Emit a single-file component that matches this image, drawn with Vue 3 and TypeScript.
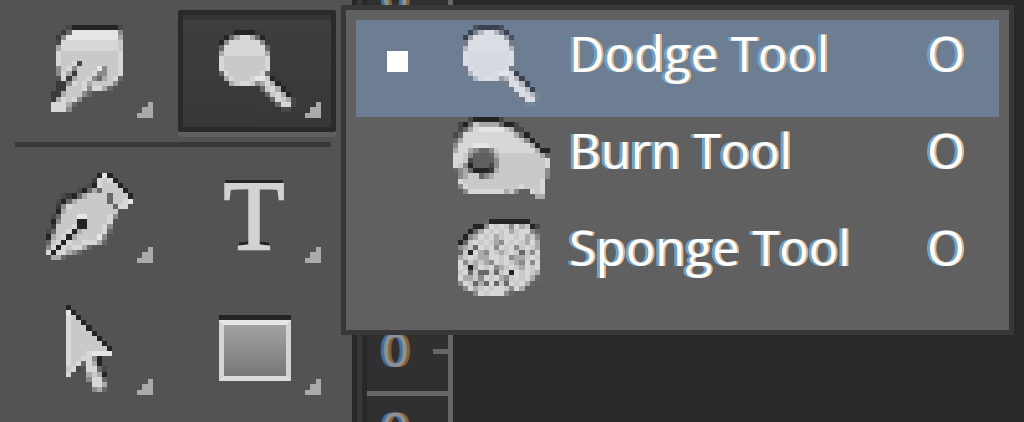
<script setup lang="ts">
import { ref } from 'vue'

interface Pixel {
  x: number
  y: number
  w: number
  fill: string
}
interface Icon {
  cols: number
  rows: number
  width: number
  height: number
  pixels: Pixel[]
}

const CELL = 5.12

const grey: Record<string, string> = {
  k: '#242424', d: '#3a3a3a', e: '#484848', m: '#686868',
  g: '#8b8b8b', a: '#aaaaaa', l: '#c9c9c9', w: '#d7d7d7', W: '#e5e5e5',
}
const highlighted: Record<string, string> = {
  k: '#3a4150', d: '#465263', e: '#6f8799', m: '#747d89',
  g: '#999da4', a: '#b3b7bf', l: '#d5d9e2', w: '#dadde4', W: '#e2e4e8',
}

function icon(map: string[], palette: Record<string, string> = grey): Icon {
  const cols = Math.max(...map.map((row) => row.length))
  const pixels: Pixel[] = []
  map.forEach((row, y) => {
    let x = 0
    while (x < row.length) {
      const key = row[x]
      let end = x + 1
      while (end < row.length && row[end] === key) end++
      if (palette[key]) pixels.push({ x, y, w: end - x, fill: palette[key] })
      x = end
    }
  })
  return {
    cols,
    rows: map.length,
    width: Math.round(cols * CELL),
    height: Math.round(map.length * CELL),
    pixels,
  }
}

const smudgeMap = [
  '...ekkkkkkkkke.',
  '..dmWWWWWWWWWg.',
  '.dgWWWWWWWWWWa.',
  '.ewwwwwwwwwwwl.',
  '.awwwwwwwwwwwl.',
  '.wlllllllllllw.',
  '.wlllllllllllw.',
  '.wllwelllllllw.',
  '.glwgllllWgllw.',
  '.gwadlllwggllw.',
  '..wdallwgmalwm.',
  '.ddgwlwallllg..',
  '.ddlllwgwwam...',
  'ddalllgm.......',
  'dawlwg.........',
  'wwwam..........',
  'wwwg...........',
  '...............',
]
const dodgeMap = [
  '..dkkkkd.......',
  '.kmawwamk......',
  'kgwwwwwwgd.....',
  'mwwwwwwwwm.....',
  'awwwwwwwwa.....',
  'wllllllllw.....',
  'wllllllllw.....',
  'wllllllllw.....',
  'mwllllllwm.....',
  '.awlllwWWlk....',
  '..alwwlgawak...',
  '........mlwak..',
  '.........mlwak.',
  '..........mwlae',
  '...........mwwe',
  '............ee.',
]
const penMap = [
  '..........kWk....',
  '.........dwlwk...',
  '........ekwlllk..',
  '......ekmamllllk.',
  '...edkmallllmlllk',
  '..ekmallllllmllwW',
  '..dgwllllllllmww.',
  '..kallllllllll...',
  '.emlllWWllllwg...',
  '.kglllkkllllw....',
  '.dlllwkklllwg....',
  'emllwkallllwm....',
  'kalwkallllWg.....',
  'mlwkwllwwwam.....',
  'gwkwlwwam........',
  'wkwwagm..........',
  '.aam.............',
]
const arrowMap = [
  'k........',
  'Wk.......',
  'wlk......',
  'wllk.....',
  'wlllk....',
  'wllllk...',
  'wlllllk..',
  'wllllllk.',
  'wlllllllk',
  'wlllwWWWW',
  'wllwwgk..',
  'wlwmwak..',
  'lwe.wwme.',
  'w...alak.',
  '....gwwm.',
  '.....wwa.',
  '.....gam.',
]
const burnMap = [
  '...ekkkkke.........',
  '.ekmlaaaamkke......',
  '.emawWWWWWlaee.....',
  'emwwwwwwwwwwamk....',
  'mawwwwwwwwwwwlgk...',
  'gwwwWWWwwwwwwwwak..',
  'awwagmmglwwwwwwwakk',
  'wwlg...mallllllllam',
  'wwle....glllllllllw',
  'wlgk...eglllllllllw',
  'mgamkkkdalllllllllg',
  '.gallmgallllllllllg',
  '.wlllllllllllllllw.',
  '.gwllllllllllwlllw.',
  '..gwwwwwwwalg..wlw.',
  '................aa.',
]
const spongeMap = [
  '.....mkkkkkkkk...',
  '...kkgwlwlgwalke.',
  '..kmawlwlwalwwgm.',
  '.kgawlwalwwlwalg.',
  'kmlwlwlagwlwlawa.',
  'galmwlwgwlwglwla.',
  'mlkwagwlalwlmlgw.',
  'alwlaawwlwgaalwl.',
  'wglalagwlwlagwgw.',
  'wlkawlwgalwlawlw.',
  'lwmlmmlmlwkwlwla.',
  'waalgwlwaglwlwam.',
  'gwlmamwmlmwlwam..',
  '.gwalwlwwlgwa....',
  '...gwlwwwgm......',
]

type Tool = { id: string; name: string; icon?: Icon }
const toolRows: Tool[][] = [
  [
    { id: 'smudge', name: 'Smudge Tool', icon: icon(smudgeMap) },
    { id: 'dodge', name: 'Dodge Tool', icon: icon(dodgeMap) },
  ],
  [
    { id: 'pen', name: 'Pen Tool', icon: icon(penMap) },
    { id: 'type', name: 'Type Tool' },
  ],
  [
    { id: 'path', name: 'Path Selection Tool', icon: icon(arrowMap) },
    { id: 'rectangle', name: 'Rectangle Tool' },
  ],
]
const activeTool = ref('dodge')

const menu = [
  { name: 'Dodge Tool', key: 'O', icon: icon(dodgeMap, highlighted) },
  { name: 'Burn Tool', key: 'O', icon: icon(burnMap) },
  { name: 'Sponge Tool', key: 'O', icon: icon(spongeMap) },
]
const chosen = ref(0)
</script>

<template>
  <div class="workspace">
    <div class="toolbar" role="toolbar" aria-label="Tools">
      <div v-for="(row, r) in toolRows" :key="r" class="tool-row">
        <button
          v-for="tool in row"
          :key="tool.id"
          type="button"
          class="tool"
          :class="{ active: tool.id === activeTool }"
          :aria-label="tool.name"
          @click="activeTool = tool.id"
        >
          <svg
            v-if="tool.icon"
            :width="tool.icon.width"
            :height="tool.icon.height"
            :viewBox="`0 0 ${tool.icon.cols} ${tool.icon.rows}`"
            preserveAspectRatio="none"
            shape-rendering="crispEdges"
          >
            <rect v-for="(p, i) in tool.icon.pixels" :key="i" :x="p.x" :y="p.y" :width="p.w" height="1" :fill="p.fill" />
          </svg>
          <span v-else-if="tool.id === 'type'" class="type-glyph">T</span>
          <span v-else class="rectangle-shape"></span>
          <svg class="more" viewBox="0 0 3 3" shape-rendering="crispEdges">
            <path d="M2 0h1v3H0V2h1V1h1z" fill="#aaa" />
          </svg>
        </button>
      </div>
    </div>
    <div class="divider"></div>
    <div class="ruler">
      <div class="ruler-part first">
        <div class="ruler-row top"><span>0</span></div>
        <div class="ruler-row"><span>0</span><i class="tick"></i></div>
      </div>
      <div class="ruler-part next">
        <div class="ruler-row"><span>0</span></div>
      </div>
    </div>
    <div class="canvas"></div>

    <div class="menu" role="menu" aria-label="Toning tools">
      <button
        v-for="(item, i) in menu"
        :key="item.name"
        type="button"
        role="menuitemradio"
        class="item"
        :class="{ chosen: i === chosen }"
        :aria-checked="i === chosen"
        @click="chosen = i"
      >
        <span class="marker"></span>
        <span class="item-icon" :class="{ flush: i === 1 }">
          <svg
            :width="item.icon.width"
            :height="item.icon.height"
            :viewBox="`0 0 ${item.icon.cols} ${item.icon.rows}`"
            preserveAspectRatio="none"
            shape-rendering="crispEdges"
          >
            <rect v-for="(p, n) in item.icon.pixels" :key="n" :x="p.x" :y="p.y" :width="p.w" height="1" :fill="p.fill" />
          </svg>
        </span>
        <span class="label">{{ item.name }}</span>
        <span class="key">{{ item.key }}</span>
      </button>
    </div>
  </div>
</template>

<style>
body {
  background: #282828;
}
</style>

<style scoped>
.workspace {
  position: relative;
  display: flex;
  height: 100vh;
  overflow: hidden;
  background: #282828;
}
button {
  margin: 0;
  border: 0;
  padding: 0;
  background: none;
  font: inherit;
  color: inherit;
}
svg {
  display: block;
}
.toolbar {
  flex: none;
  box-sizing: border-box;
  width: 352px;
  padding: 10px 16px 0 10px;
  background: #535353;
}
.tool-row {
  display: flex;
  gap: 10px;
  margin-bottom: 10px;
}
.tool-row:first-child {
  margin-bottom: 8px;
  padding-bottom: 15px;
  background: linear-gradient(#383838, #383838) 5px 100% / 316px 5px no-repeat;
}
.tool {
  position: relative;
  box-sizing: border-box;
  display: flex;
  align-items: center;
  justify-content: center;
  width: 158px;
  height: 122px;
}
.tool.active {
  background: linear-gradient(#3f3f3f, #373737);
  box-shadow: inset 0 0 0 5px #2a2a2a, inset 0 10px #343434, 0 5px #606060;
  border-radius: 3px;
}
.more {
  position: absolute;
  right: 15px;
  bottom: 14px;
  width: 16px;
  height: 16px;
}
.type-glyph {
  margin-right: 6px;
  font: 100px/112px "Liberation Serif", serif;
  color: #d2d2d2;
  -webkit-text-stroke: 2px #d2d2d2;
  text-shadow: 0 -4px #242424;
}
.rectangle-shape {
  box-sizing: border-box;
  width: 72px;
  height: 66px;
  margin-right: 4px;
  border: 5px solid #d4d4d4;
  border-top-color: #e8e8e8;
  border-bottom-color: #dcdcdc;
  background: linear-gradient(#a2a2a2, #777);
  box-shadow: 0 -5px #242424;
  height: 61px;
  margin-top: 5px;
}
.divider {
  flex: none;
  width: 5px;
  border: solid #282828;
  border-width: 0 5px;
  background: #383838;
}
.ruler {
  flex: none;
  box-sizing: border-box;
  width: 86px;
  border-right: 5px solid #666;
  background: #303030;
  color: #8e9096;
  font: 48px/46px "Liberation Sans", Arial, sans-serif;
  text-shadow: -3px 0 #41719c, 3px 0 #8a6130;
}
.ruler-part.first {
  box-sizing: border-box;
  display: flex;
  flex-direction: column;
  justify-content: space-between;
  height: 396px;
  padding-bottom: 17px;
  border-bottom: 5px solid #666;
}
.ruler-part.next {
  padding-top: 11px;
}
.ruler-row {
  display: flex;
  align-items: center;
  justify-content: space-between;
  padding-left: 15px;
}
.ruler-row.top {
  margin-top: -25px;
}
.tick {
  width: 15px;
  height: 5px;
  background: #666;
}
.canvas {
  flex: 1;
}
.menu {
  position: absolute;
  top: 5px;
  left: 341px;
  right: 10px;
  border: 5px solid #383838;
  padding: 10px 10px 19px;
  background: #606060;
}
.item {
  display: flex;
  align-items: flex-start;
  width: 100%;
  height: 97px;
  padding: 0 34px 0 31px;
  color: #fff;
  font: 500 49px/66px "Open Sans", "Noto Sans", sans-serif;
  text-align: left;
  text-shadow: -3px 0 #66a4dc, 2px 0 #e9b682;
}
.item.chosen {
  background: #6d7d92;
}
.marker {
  width: 21px;
  height: 21px;
  margin: 31px 45px 0 0;
}
.chosen .marker {
  background: #fff;
}
.item-icon {
  display: flex;
  justify-content: center;
  width: 97px;
  margin-right: 19px;
  padding-top: 5px;
}
.item-icon.flush {
  padding-top: 0;
}
.label {
  flex: 1;
  white-space: nowrap;
}
</style>
